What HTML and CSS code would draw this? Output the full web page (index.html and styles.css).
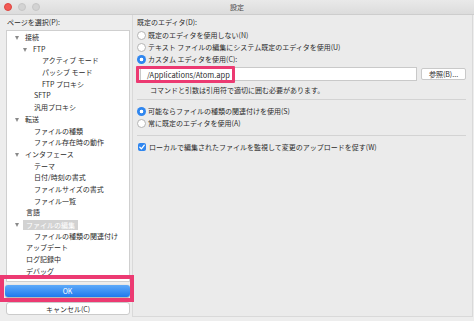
FILE: index.html
```html
<!DOCTYPE html>
<html lang="ja">

<head>
    <meta charset="UTF-8">
    <meta name="viewport" content="width=device-width, initial-scale=1.0">
    <title>設定</title>
    <link rel="stylesheet" href="styles.css">
</head>

<body>
    <div class="window">
        <div class="titlebar">
            <div class="lights">
                <span class="light light-close"></span>
                <span class="light"></span>
                <span class="light"></span>
            </div>
            <div class="title">設定</div>
        </div>

        <div class="content">
            <div class="sidebar">
                <div class="label">ページを選択(P):</div>

                <ul class="tree">
                    <li class="lv0"><span class="toggle"></span>接続</li>
                    <li class="lv1"><span class="toggle"></span>FTP</li>
                    <li class="lv2">アクティブ モード</li>
                    <li class="lv2">パッシブ モード</li>
                    <li class="lv2">FTP プロキシ</li>
                    <li class="lv1">SFTP</li>
                    <li class="lv1">汎用プロキシ</li>
                    <li class="lv0"><span class="toggle"></span>転送</li>
                    <li class="lv1">ファイルの種類</li>
                    <li class="lv1">ファイル存在時の動作</li>
                    <li class="lv0"><span class="toggle"></span>インタフェース</li>
                    <li class="lv1">テーマ</li>
                    <li class="lv1">日付/時刻の書式</li>
                    <li class="lv1">ファイルサイズの書式</li>
                    <li class="lv1">ファイル一覧</li>
                    <li class="lv0">言語</li>
                    <li class="lv0"><span class="toggle"></span><span class="selected">ファイルの編集</span></li>
                    <li class="lv1">ファイルの種類の関連付け</li>
                    <li class="lv0">アップデート</li>
                    <li class="lv0">ログ記録中</li>
                    <li class="lv0">デバッグ</li>
                </ul>

                <div class="ok-wrap">
                    <button class="btn-ok">OK</button>
                    <div class="mark mark-ok"></div>
                </div>
                <button class="btn-cancel">キャンセル(C)</button>
            </div>

            <div class="panel">
                <div class="row heading">既定のエディタ(D):</div>

                <div class="row"><span class="radio"></span>既定のエディタを使用しない(N)</div>
                <div class="row"><span class="radio"></span>テキスト ファイルの編集にシステム既定のエディタを使用(U)</div>
                <div class="row"><span class="radio checked"></span>カスタム エディタを使用(C):</div>

                <div class="editor-row">
                    <div class="input">/Applications/Atom.app</div>
                    <button class="btn-browse">参照(B)...</button>
                    <div class="mark mark-input"></div>
                </div>
                <div class="row hint">コマンドと引数は引用符で適切に囲む必要があります。</div>

                <div class="separator"></div>

                <div class="row row-after-sep"><span class="radio checked"></span>可能ならファイルの種類の関連付けを使用(S)</div>
                <div class="row"><span class="radio"></span>常に既定のエディタを使用(A)</div>

                <div class="separator"></div>

                <div class="row row-after-sep">
                    <span class="checkbox">
                        <svg width="8" height="8" viewBox="0 0 8 8">
                            <path d="M1.8 4.2 L3.4 5.8 L6.3 2.2" fill="none" stroke="white" stroke-width="1.3" stroke-linecap="round" stroke-linejoin="round" />
                        </svg>
                    </span>ローカルで編集されたファイルを監視して変更のアップロードを促す(W)
                </div>
            </div>
        </div>
    </div>
</body>

</html>
```

FILE: styles.css
```css
* {
    box-sizing: border-box;
}

html,
body {
    margin: 0;
    padding: 0;
}

body {
    width: 474px;
    height: 321px;
    overflow: hidden;
    background: #ededed;
    font-family: "Noto Sans CJK JP", "Noto Sans", sans-serif;
    font-size: 7px;
    color: #2b2b2b;
}

.window {
    display: flex;
    flex-direction: column;
    height: 321px;
}

/* title bar */
.titlebar {
    position: relative;
    height: 15px;
    display: flex;
    align-items: center;
    justify-content: center;
    background: linear-gradient(#e9e9e9, #dcdcdc);
    border-bottom: 1px solid #cdcdcd;
}

.lights {
    position: absolute;
    left: 4px;
    top: 3px;
    display: flex;
    gap: 6px;
}

.light {
    width: 8px;
    height: 8px;
    border-radius: 50%;
    background: #d3d3d3;
    border: 1px solid #c6c6c6;
}

.light-close {
    background: #f25a55;
    border-color: #de4540;
}

.title {
    font-size: 7px;
    color: #4a4a4a;
}

.content {
    display: flex;
    flex: 1;
}

/* left column */
.sidebar {
    width: 132px;
    padding: 2px 2px 0 6px;
    display: flex;
    flex-direction: column;
}

.label {
    height: 10px;
    line-height: 10px;
    margin-left: 1px;
    margin-bottom: 3px;
}

.tree {
    list-style: none;
    margin: 0;
    padding: 1px 0 4px;
    background: #fff;
    border: 1px solid #cfcfcf;
}

.tree li {
    height: 11.7px;
    line-height: 11.7px;
    display: flex;
    align-items: center;
    white-space: nowrap;
}

.lv0 {
    padding-left: 19px;
}

.lv1 {
    padding-left: 27px;
}

.lv2 {
    padding-left: 35px;
}

.toggle {
    width: 0;
    height: 0;
    margin-left: -11px;
    margin-right: 6px;
    border-left: 2.5px solid transparent;
    border-right: 2.5px solid transparent;
    border-top: 4px solid #8a8a8a;
}

.selected {
    background: #d2d2d2;
    color: #fff;
    padding: 0 3px;
    margin-left: -2px;
    line-height: 10px;
}

.ok-wrap {
    position: relative;
    margin-top: 3px;
}

button {
    font-family: inherit;
    font-size: 7px;
    padding: 0;
    cursor: pointer;
}

.btn-ok {
    display: block;
    width: 125px;
    height: 12px;
    margin-left: -1px;
    border: none;
    border-radius: 3px;
    color: #fff;
    background: linear-gradient(#5eaaf9, #1f79ee);
    box-shadow: 0 0.5px 1px rgba(0, 0, 0, 0.25);
}

.btn-cancel {
    width: 124px;
    height: 13px;
    margin-top: 5px;
    border: 1px solid #cbcbcb;
    border-radius: 3px;
    background: #fff;
    color: #2b2b2b;
}

/* pink annotation frames */
.mark {
    position: absolute;
    border: 4px solid #ec3a72;
    pointer-events: none;
}

.mark-ok {
    top: -10px;
    bottom: -5px;
    left: -6px;
    right: -4px;
}

.mark-input {
    top: -1px;
    left: -1px;
    width: 99px;
    height: 17px;
    border-width: 3px;
    border-radius: 1px;
}

/* right panel */
.panel {
    flex: 1;
    margin: 0 1px 4px 0;
    padding: 1px 6px 0 4px;
    background: #ebebeb;
    border: 1px solid #d9d9d9;
    border-top: none;
    display: flex;
    flex-direction: column;
}

.row {
    height: 12px;
    display: flex;
    align-items: center;
    white-space: nowrap;
}

.heading {
    height: 10px;
    margin-top: 1px;
    margin-bottom: 2px;
}

.radio {
    width: 9px;
    height: 9px;
    margin-right: 2px;
    border-radius: 50%;
    background: #fff;
    border: 1px solid #b4b4b4;
    flex-shrink: 0;
}

.radio.checked {
    border: none;
    background: radial-gradient(circle, #fff 0 1.6px, #2f86ef 2.1px);
}

.checkbox {
    width: 8px;
    height: 8px;
    margin-left: 1px;
    margin-right: 3px;
    border-radius: 2px;
    background: #2f86ef;
    display: flex;
    flex-shrink: 0;
}

.editor-row {
    position: relative;
    display: flex;
    align-items: center;
    margin-top: 2px;
    height: 14px;
}

.input {
    width: 277px;
    height: 14px;
    margin-left: 3px;
    padding-left: 6px;
    line-height: 13px;
    background: #fff;
    border: 1px solid #c9c9c9;
    font-size: 7.5px;
}

.btn-browse {
    width: 45px;
    height: 12px;
    margin-left: 4px;
    border: 1px solid #c9c9c9;
    border-radius: 2px;
    background: #fff;
    color: #2b2b2b;
}

.hint {
    height: 10px;
    margin-top: 4px;
    padding-left: 13px;
}

.separator {
    height: 1px;
    margin-top: 4px;
    background: #d3d3d3;
}

.row-after-sep {
    margin-top: 5px;
}

.separator + .row-after-sep + .row + .separator {
    margin-top: 6px;
}
```
